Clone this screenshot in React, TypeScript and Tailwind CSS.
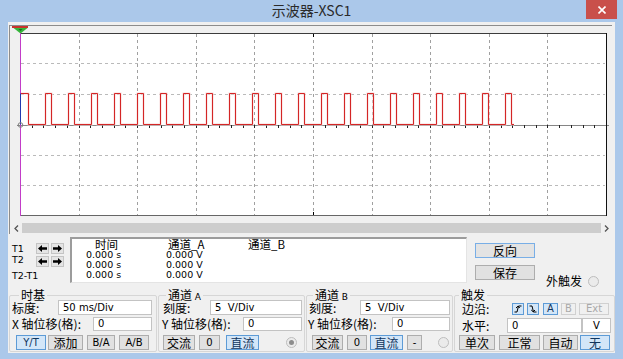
import React from 'react';

type Tone = 'plain' | 'on' | 'off' | 'def';

const toneClass: Record<Tone, string> = {
  plain: 'bg-[#e1e1e1] border-[#adadad] text-black',
  on: 'bg-[#d3e6f8] border-[#5d9bd6] text-[#10345c]',
  off: 'bg-[#f0f0f0] border-[#d0d0d0] text-[#a9a9a9]',
  def: 'bg-[#e3e3e3] border-[#78aee6] text-black',
};

const Btn: React.FC<{ className: string; tone?: Tone; latin?: boolean; children: React.ReactNode }> = ({
  className,
  tone = 'plain',
  latin,
  children,
}) => (
  <div
    className={`${className} ${toneClass[tone]} border flex items-center justify-center shrink-0 ${
      latin ? "font-['DejaVu_Sans',sans-serif] text-[10px]" : 'text-[12px]'
    } leading-none`}
  >
    {children}
  </div>
);

const Field: React.FC<{ className: string; children: React.ReactNode; center?: boolean }> = ({ className, children, center }) => (
  <div
    className={`${className} bg-white border border-[#c3c3c3] flex items-center ${
      center ? 'justify-center' : 'pl-[4px]'
    } font-['DejaVu_Sans',sans-serif] text-[10px] leading-none shrink-0`}
  >
    {children}
  </div>
);

const Radio: React.FC<{ filled?: boolean; className?: string }> = ({ filled, className = '' }) => (
  <div
    className={`${className} w-[11px] h-[11px] rounded-full border border-[#bdbdbd] bg-[#ebebeb] flex items-center justify-center shrink-0`}
  >
    {filled && <div className="w-[5px] h-[5px] rounded-full bg-[#8d8d8d]" />}
  </div>
);

const Arrow: React.FC<{ dir: 'l' | 'r' }> = ({ dir }) => (
  <div className="w-[13px] h-[11px] bg-[#e4e4e4] border border-[#c4c4c4] flex items-center justify-center">
    <svg width="9" height="7" viewBox="0 0 9 7">
      {dir === 'l' ? <path d="M0 3.5 L4 0 V2.3 H9 V4.7 H4 V7 Z" fill="#000" /> : <path d="M9 3.5 L5 0 V2.3 H0 V4.7 H5 V7 Z" fill="#000" />}
    </svg>
  </div>
);

const Group: React.FC<{ title: React.ReactNode; className: string; legend: string; children: React.ReactNode }> = ({
  title,
  className,
  legend,
  children,
}) => (
  <div className={`${className} relative mt-[8px] h-[57px] border border-[#d6d6d6] rounded-[2px] flex flex-col shrink-0`}>
    <div className={`${legend} absolute -top-[7px] px-[2px] bg-[#f0f0f0] text-[12px] leading-[12px]`}>{title}</div>
    {children}
  </div>
);

const Scope: React.FC = () => {
  const pulses = Array.from({ length: 21 }, (_, k) => 45 + k * 23);
  let wave = 'M20.5 93.5 H28.5 V124.5';
  pulses.forEach(x => {
    wave += ` H${x + 0.5} V93.5 H${x + 6.5} V124.5`;
  });
  wave += ' H514';
  const vx = Array.from({ length: 9 }, (_, k) => Math.round(20 + (k + 1) * 58.6) + 0.5);
  const hy = [63.5, 94.5, 155.5, 185.5];
  const ticks = Array.from({ length: 49 }, (_, k) => Math.round(20 + (k + 1) * 11.72) + 0.5);

  return (
    <svg width="602" height="191" className="block">
      <g transform="translate(-10 -26)">
        <rect x="20" y="33" width="586" height="183" fill="#fff" />
        {vx.map(x => (
          <line key={x} x1={x} y1="34" x2={x} y2="215" stroke="#a0a0a0" strokeDasharray="3 3" />
        ))}
        {hy.map(y => (
          <line key={y} x1="21" y1={y} x2="605" y2={y} stroke="#bababa" strokeDasharray="3 3" />
        ))}
        <line x1="313.5" y1="33" x2="313.5" y2="37" stroke="#000" />
        <line x1="313.5" y1="212" x2="313.5" y2="216" stroke="#000" />
        <line x1="17" y1="125.5" x2="609" y2="125.5" stroke="#858585" />
        {ticks.map(x => (
          <line key={x} x1={x} y1="125" x2={x} y2="128" stroke="#222" />
        ))}
        <path d={wave} fill="none" stroke="#f7d8d8" strokeWidth="2" />
        <path d={wave} fill="none" stroke="#d42626" />
        <line x1="20" y1="33.5" x2="606" y2="33.5" stroke="#3c3c3c" />
        <line x1="606.5" y1="33" x2="606.5" y2="216" stroke="#111" />
        <line x1="20" y1="215.5" x2="606" y2="215.5" stroke="#666" />
        <line x1="20.5" y1="33" x2="20.5" y2="216" stroke="#c23cc8" />
        <line x1="20.5" y1="93.5" x2="20.5" y2="124.5" stroke="#2238b0" />
        <circle cx="20.5" cy="125" r="2.3" fill="none" stroke="#808080" />
        <rect x="12" y="26" width="16" height="2" fill="#c8322c" />
        <path d="M13.5 28 H27.5 L20.5 33.5 Z" fill="#35b53a" />
        <path d="M18.5 29 H22.5 L20.5 31 Z" fill="#1c6a20" />
      </g>
    </svg>
  );
};

export default function App() {
  return (
    <div className="w-[623px] h-[359px] bg-[#abc8ea] flex flex-col overflow-hidden font-['Noto_Sans_CJK_SC',sans-serif] text-black">
      {/* title bar */}
      <div className="relative h-[22px] shrink-0 flex items-center justify-center">
        <span className="text-[14px] leading-none text-[#2a2a2a] -mt-[2px]">示波器-XSC1</span>
        <div className="absolute right-[6px] top-0 w-[31px] h-[19px] bg-[#c9504b] flex items-center justify-center">
          <svg width="8" height="8" viewBox="0 0 8 8">
            <path d="M0.5 0.5 L7.5 7.5 M7.5 0.5 L0.5 7.5" stroke="#fff" strokeWidth="1.6" />
          </svg>
        </div>
      </div>

      <div className="mx-[8px] h-[331px] shrink-0 bg-[#f0f0f0] flex flex-col">
        {/* screen */}
        <div className="ml-[1px] mt-[3px] w-[603px] h-[209px] border-t border-l border-[#8c8c8c] flex flex-col shrink-0">
          <Scope />
          <div className="mt-[6px] h-[10px] flex items-center">
            <div className="w-[12px] flex justify-center">
              <svg width="5" height="7" viewBox="0 0 5 7">
                <path d="M4 0.5 L1 3.5 L4 6.5" fill="none" stroke="#555" strokeWidth="1.3" />
              </svg>
            </div>
            <div className="flex-1 h-[10px] bg-[#cdcdcd]" />
            <div className="w-[11px] flex justify-center">
              <svg width="5" height="7" viewBox="0 0 5 7">
                <path d="M1 0.5 L4 3.5 L1 6.5" fill="none" stroke="#555" strokeWidth="1.3" />
              </svg>
            </div>
          </div>
        </div>

        {/* readout */}
        <div className="mt-[3px] h-[46px] flex shrink-0">
          <div className="w-[62px] pl-[4px] flex flex-col font-['DejaVu_Sans',sans-serif] text-[9.5px] leading-none">
            <div className="mt-[6px] h-[11px] flex items-center">
              <span className="w-[24px]">T1</span>
              <Arrow dir="l" />
              <div className="w-[2px]" />
              <Arrow dir="r" />
            </div>
            <div className="mt-[2px] h-[11px] flex items-center">
              <span className="w-[24px] -mt-[3px]">T2</span>
              <Arrow dir="l" />
              <div className="w-[2px]" />
              <Arrow dir="r" />
            </div>
            <div className="mt-[3px] h-[11px] flex items-center">T2-T1</div>
          </div>
          <div className="w-[397px] h-[46px] bg-white border-t-2 border-l-2 border-[#9c9c9c] border-r border-b border-r-[#e4e4e4] border-b-[#e4e4e4] flex">
            <div className="ml-[14px] w-[80px] flex flex-col">
              <div className="h-[11px] leading-[11px] text-[11.5px] pl-[9px]">时间</div>
              {['0.000 s', '0.000 s', '0.000 s'].map((v, i) => (
                <div key={i} className="h-[10px] leading-[10px] text-[9.5px] font-['DejaVu_Sans',sans-serif]">
                  {v}
                </div>
              ))}
            </div>
            <div className="w-[82px] flex flex-col">
              <div className="h-[11px] leading-[11px] text-[11.5px] pl-[2px]">通道_A</div>
              {['0.000 V', '0.000 V', '0.000 V'].map((v, i) => (
                <div key={i} className="h-[10px] leading-[10px] text-[9.5px] font-['DejaVu_Sans',sans-serif]">
                  {v}
                </div>
              ))}
            </div>
            <div className="w-[80px] flex flex-col">
              <div className="h-[11px] leading-[11px] text-[11.5px]">通道_B</div>
            </div>
          </div>
          <div className="ml-[8px] w-[60px] flex flex-col">
            <Btn className="mt-[6px] w-[60px] h-[15px]" tone="def">
              反向
            </Btn>
            <Btn className="mt-[7px] w-[60px] h-[15px]">保存</Btn>
          </div>
          <div className="ml-[11px] mt-[37px] h-[14px] flex items-center">
            <span className="text-[12px] leading-none">外触发</span>
            <Radio className="ml-[6px]" />
          </div>
        </div>

        {/* controls */}
        <div className="mt-[4px] h-[65px] pl-[1px] flex gap-[1px] shrink-0 text-[12px] leading-none">
          <Group title="时基" className="w-[148px]" legend="left-[9px]">
            <div className="mt-[4px] h-[15px] flex items-center">
              <span className="w-[48px] pl-[2px]">标度:</span>
              <Field className="w-[94px] h-[15px]">50 ms/Div</Field>
            </div>
            <div className="mt-[2px] h-[14px] flex items-center">
              <span className="w-[83px] pl-[2px]">X 轴位移(格):</span>
              <Field className="w-[59px] h-[14px]">0</Field>
            </div>
            <div className="mt-[4px] h-[15px] pl-[6px] flex">
              <Btn className="w-[30px] h-[15px]" tone="on" latin>
                Y/T
              </Btn>
              <Btn className="ml-[2px] w-[35px] h-[15px]">添加</Btn>
              <Btn className="ml-[4px] w-[28px] h-[15px]" latin>
                B/A
              </Btn>
              <Btn className="ml-[4px] w-[30px] h-[15px]" latin>
                A/B
              </Btn>
            </div>
          </Group>

          <Group
            title={
              <>
                通道 <span className="font-['DejaVu_Sans',sans-serif] text-[9px]">A</span>
              </>
            }
            className="w-[147px]"
            legend="left-[7px]"
          >
            <div className="mt-[4px] h-[15px] flex items-center">
              <span className="w-[51px] pl-[4px]">刻度:</span>
              <Field className="w-[92px] h-[15px]">5&nbsp;&nbsp;V/Div</Field>
            </div>
            <div className="mt-[2px] h-[14px] flex items-center">
              <span className="w-[84px] pl-[3px]">Y 轴位移(格):</span>
              <Field className="w-[59px] h-[14px]">0</Field>
            </div>
            <div className="mt-[4px] h-[15px] pl-[4px] flex items-center">
              <Btn className="w-[32px] h-[15px]">交流</Btn>
              <Btn className="ml-[4px] w-[21px] h-[15px]" latin>
                0
              </Btn>
              <Btn className="ml-[6px] w-[33px] h-[15px]" tone="on">
                直流
              </Btn>
              <Radio filled className="ml-[27px]" />
            </div>
          </Group>

          <Group
            title={
              <>
                通道 <span className="font-['DejaVu_Sans',sans-serif] text-[9px]">B</span>
              </>
            }
            className="w-[147px]"
            legend="left-[6px]"
          >
            <div className="mt-[4px] h-[15px] flex items-center">
              <span className="w-[53px] pl-[2px]">刻度:</span>
              <Field className="w-[90px] h-[15px]">5&nbsp;&nbsp;V/Div</Field>
            </div>
            <div className="mt-[2px] h-[14px] flex items-center">
              <span className="w-[85px] pl-[1px]">Y 轴位移(格):</span>
              <Field className="w-[58px] h-[14px]">0</Field>
            </div>
            <div className="mt-[4px] h-[15px] pl-[5px] flex items-center">
              <Btn className="w-[31px] h-[15px]">交流</Btn>
              <Btn className="ml-[4px] w-[20px] h-[15px]" latin>
                0
              </Btn>
              <Btn className="ml-[3px] w-[33px] h-[15px]" tone="on">
                直流
              </Btn>
              <Btn className="ml-[4px] w-[15px] h-[15px]" latin>
                -
              </Btn>
              <Radio className="ml-[16px]" />
            </div>
          </Group>

          <Group title="触发" className="flex-1" legend="left-[4px]">
            <div className="mt-[5px] h-[16px] flex items-center">
              <span className="w-[57px] pl-[7px]">边沿:</span>
              <Btn className="w-[12px] h-[12px]" tone="on">
                <svg width="8" height="8" viewBox="0 0 8 8">
                  <path d="M0.5 7 H3 L4.5 1 H7.5 M2 3 L4 1.2 L5.8 3" fill="none" stroke="#000" strokeWidth="1" />
                </svg>
              </Btn>
              <Btn className="ml-[3px] w-[12px] h-[12px]" tone="on">
                <svg width="8" height="8" viewBox="0 0 8 8">
                  <path d="M0.5 1 H3 L4.5 7 H7.5 M2.2 5 L4.2 6.8 L6 5" fill="none" stroke="#000" strokeWidth="1" />
                </svg>
              </Btn>
              <Btn className="ml-[4px] w-[15px] h-[12px]" tone="on" latin>
                A
              </Btn>
              <Btn className="ml-[3px] w-[15px] h-[12px]" tone="off" latin>
                B
              </Btn>
              <Btn className="ml-[3px] w-[30px] h-[12px]" tone="off" latin>
                Ext
              </Btn>
            </div>
            <div className="mt-[1px] h-[15px] flex items-center">
              <span className="w-[52px] pl-[7px]">水平:</span>
              <Field className="w-[75px] h-[15px]">0</Field>
              <Field className="w-[29px] h-[15px]" center>
                V
              </Field>
            </div>
            <div className="mt-[2px] h-[15px] pl-[4px] flex items-center">
              <Btn className="w-[36px] h-[15px]">单次</Btn>
              <Btn className="ml-[4px] w-[41px] h-[15px]">正常</Btn>
              <Btn className="ml-[3px] w-[35px] h-[15px]">自动</Btn>
              <Btn className="ml-[2px] w-[30px] h-[15px]" tone="on">
                无
              </Btn>
            </div>
          </Group>
        </div>
      </div>
    </div>
  );
}
